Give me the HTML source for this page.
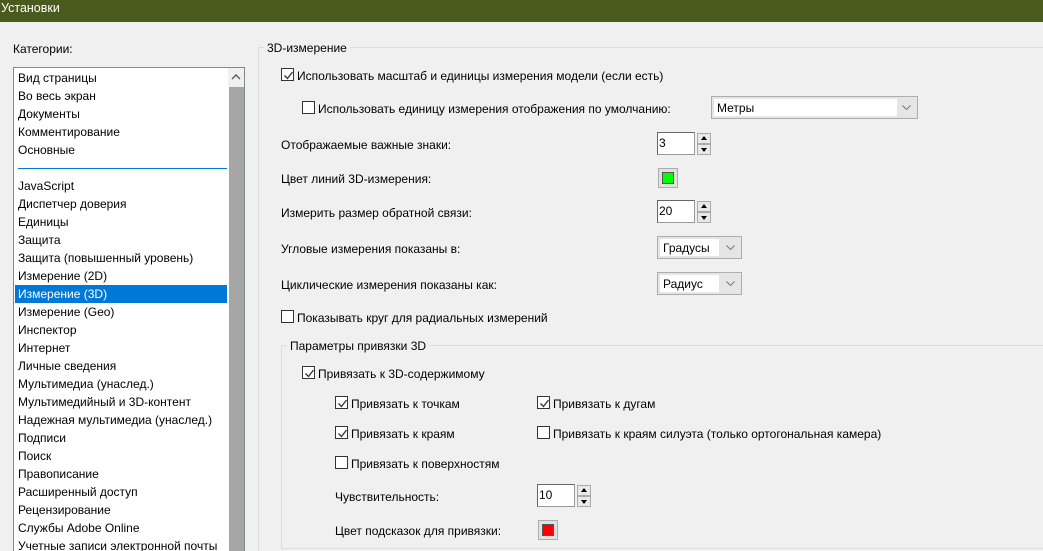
<!DOCTYPE html>
<html style="width:1043px;height:551px;overflow:hidden"><head><meta charset="utf-8"><style>
*{margin:0;padding:0;box-sizing:border-box}
body{width:1043px;height:551px;overflow:hidden;background:#f0f0f0;font-family:"Liberation Sans","DejaVu Sans",sans-serif;font-size:12px;color:#000;position:relative}
.a{position:absolute;white-space:nowrap}
.t{position:absolute;white-space:nowrap;line-height:14px;margin-top:1px}
.cb{position:absolute;width:13px;height:13px;border:1px solid #333;background:#fff}
.cb svg{position:absolute;left:1px;top:1px}
.spin{position:absolute;width:38px;height:23px;background:#fff;border:1px solid #999;border-top-color:#666;border-left-color:#666;padding:2px 0 0 1px;font-size:12px;line-height:16px}
.sb{position:absolute;width:14px;height:11px;background:#e9e9e9;border:1px solid #aaa}
.sb:after{content:"";position:absolute;left:3px;border-left:3px solid transparent;border-right:3px solid transparent}
.up:after{top:2px;border-bottom:4px solid #000}
.dn:after{top:3px;border-top:4px solid #000}
.dd{position:absolute;height:23px;background:#e5e5e5;border:1px solid #adadad}
.dd .in{position:absolute;left:2px;top:2px;bottom:2px;background:#fff;padding-left:3px;line-height:18px}
.dd svg{position:absolute;right:6px;top:8px}
.sw{position:absolute;width:20px;height:20px;border:1px solid #adadad;background:#e1e1e1}
.sw i{position:absolute;left:3px;top:3px;width:12px;height:12px;border:1px solid #555}
.li{position:absolute;left:18px;line-height:18px;margin-top:1px}
</style></head><body>
<div class="a" style="left:0;top:0;width:1043px;height:22px;background:#4a591e;color:#fff;padding-left:1px;line-height:16px;font-size:12.5px">Установки</div>
<div class="t" style="left:13px;top:41px">Категории:</div>
<div class="a" style="left:13px;top:67px;width:232px;height:484px;border:1px solid #828790;border-bottom:none;background:#fff"></div>
<div class="a" style="left:228px;top:68px;width:16px;height:19px;background:#f0f0f0"></div>
<svg class="a" style="left:231px;top:74px" width="10" height="6"><path d="M1 5 L5 1 L9 5" fill="none" stroke="#606060" stroke-width="1.5"/></svg>
<div class="a" style="left:229px;top:87px;width:15px;height:464px;background:#a6a6a6"></div>
<div class="a" style="left:18px;top:168px;width:209px;height:1px;background:#0078d7"></div>
<div class="a" style="left:15px;top:285px;width:212px;height:18px;background:#0078d7"></div>
<div class="li" style="top:68px">Вид страницы</div>
<div class="li" style="top:86px">Во весь экран</div>
<div class="li" style="top:104px">Документы</div>
<div class="li" style="top:122px">Комментирование</div>
<div class="li" style="top:140px">Основные</div>
<div class="li" style="top:176px">JavaScript</div>
<div class="li" style="top:194px">Диспетчер доверия</div>
<div class="li" style="top:212px">Единицы</div>
<div class="li" style="top:230px">Защита</div>
<div class="li" style="top:248px">Защита (повышенный уровень)</div>
<div class="li" style="top:266px">Измерение (2D)</div>
<div class="li" style="top:284px;color:#fff">Измерение (3D)</div>
<div class="li" style="top:302px">Измерение (Geo)</div>
<div class="li" style="top:320px">Инспектор</div>
<div class="li" style="top:338px">Интернет</div>
<div class="li" style="top:356px">Личные сведения</div>
<div class="li" style="top:374px">Мультимедиа (унаслед.)</div>
<div class="li" style="top:392px">Мультимедийный и 3D-контент</div>
<div class="li" style="top:410px">Надежная мультимедиа (унаслед.)</div>
<div class="li" style="top:428px">Подписи</div>
<div class="li" style="top:446px">Поиск</div>
<div class="li" style="top:464px">Правописание</div>
<div class="li" style="top:482px">Расширенный доступ</div>
<div class="li" style="top:500px">Рецензирование</div>
<div class="li" style="top:518px">Службы Adobe Online</div>
<div class="li" style="top:536px">Учетные записи электронной почты</div>

<div class="a" style="left:258px;top:47px;width:800px;height:504px;border:1px solid #dcdcdc;border-bottom:none"></div>
<div class="t" style="left:264px;top:40px;background:#f0f0f0;padding:0 3px">3D-измерение</div>

<div class="cb" style="left:281px;top:68px"><svg width="11" height="11"><path d="M1.5 5.5 L4.5 8.5 L9.5 2" fill="none" stroke="#333" stroke-width="1.3"/></svg></div>
<div class="t" style="left:297px;top:68px">Использовать масштаб и единицы измерения модели (если есть)</div>
<div class="cb" style="left:302px;top:101px"></div>
<div class="t" style="left:318px;top:101px">Использовать единицу измерения отображения по умолчанию:</div>
<div class="dd" style="left:711px;top:96px;width:207px"><div class="in" style="right:20px">Метры</div><svg width="9" height="5"><path d="M0.5 0.5 L4.5 4.5 L8.5 0.5" fill="none" stroke="#777"/></svg></div>

<div class="t" style="left:281px;top:137px">Отображаемые важные знаки:</div>
<div class="spin" style="left:657px;top:132px">3</div>
<div class="sb up" style="left:697px;top:133px"></div><div class="sb dn" style="left:697px;top:144px"></div>

<div class="t" style="left:281px;top:171px">Цвет линий 3D-измерения:</div>
<div class="sw" style="left:658px;top:168px"><i style="background:#00ff00"></i></div>

<div class="t" style="left:281px;top:205px">Измерить размер обратной связи:</div>
<div class="spin" style="left:657px;top:200px">20</div>
<div class="sb up" style="left:697px;top:201px"></div><div class="sb dn" style="left:697px;top:212px"></div>

<div class="t" style="left:281px;top:241px">Угловые измерения показаны в:</div>
<div class="dd" style="left:657px;top:236px;width:85px"><div class="in" style="right:22px">Градусы</div><svg width="9" height="5"><path d="M0.5 0.5 L4.5 4.5 L8.5 0.5" fill="none" stroke="#777"/></svg></div>
<div class="t" style="left:281px;top:277px">Циклические измерения показаны как:</div>
<div class="dd" style="left:657px;top:272px;width:85px"><div class="in" style="right:22px">Радиус</div><svg width="9" height="5"><path d="M0.5 0.5 L4.5 4.5 L8.5 0.5" fill="none" stroke="#777"/></svg></div>

<div class="cb" style="left:281px;top:310px"></div>
<div class="t" style="left:297px;top:310px">Показывать круг для радиальных измерений</div>

<div class="a" style="left:281px;top:345px;width:800px;height:204px;border:1px solid #dcdcdc"></div>
<div class="t" style="left:287px;top:338px;background:#f0f0f0;padding:0 3px">Параметры привязки 3D</div>

<div class="cb" style="left:302px;top:366px"><svg width="11" height="11"><path d="M1.5 5.5 L4.5 8.5 L9.5 2" fill="none" stroke="#333" stroke-width="1.3"/></svg></div>
<div class="t" style="left:318px;top:366px">Привязать к 3D-содержимому</div>
<div class="cb" style="left:335px;top:396px"><svg width="11" height="11"><path d="M1.5 5.5 L4.5 8.5 L9.5 2" fill="none" stroke="#333" stroke-width="1.3"/></svg></div>
<div class="t" style="left:351px;top:396px">Привязать к точкам</div>
<div class="cb" style="left:537px;top:396px"><svg width="11" height="11"><path d="M1.5 5.5 L4.5 8.5 L9.5 2" fill="none" stroke="#333" stroke-width="1.3"/></svg></div>
<div class="t" style="left:553px;top:396px">Привязать к дугам</div>
<div class="cb" style="left:335px;top:426px"><svg width="11" height="11"><path d="M1.5 5.5 L4.5 8.5 L9.5 2" fill="none" stroke="#333" stroke-width="1.3"/></svg></div>
<div class="t" style="left:351px;top:426px">Привязать к краям</div>
<div class="cb" style="left:537px;top:426px"></div>
<div class="t" style="left:553px;top:426px">Привязать к краям силуэта (только ортогональная камера)</div>
<div class="cb" style="left:335px;top:456px"></div>
<div class="t" style="left:351px;top:456px">Привязать к поверхностям</div>

<div class="t" style="left:335px;top:489px">Чувствительность:</div>
<div class="spin" style="left:537px;top:484px">10</div>
<div class="sb up" style="left:577px;top:485px"></div><div class="sb dn" style="left:577px;top:496px"></div>
<div class="t" style="left:335px;top:523px">Цвет подсказок для привязки:</div>
<div class="sw" style="left:538px;top:520px"><i style="background:#ff0000"></i></div>
</body></html>
